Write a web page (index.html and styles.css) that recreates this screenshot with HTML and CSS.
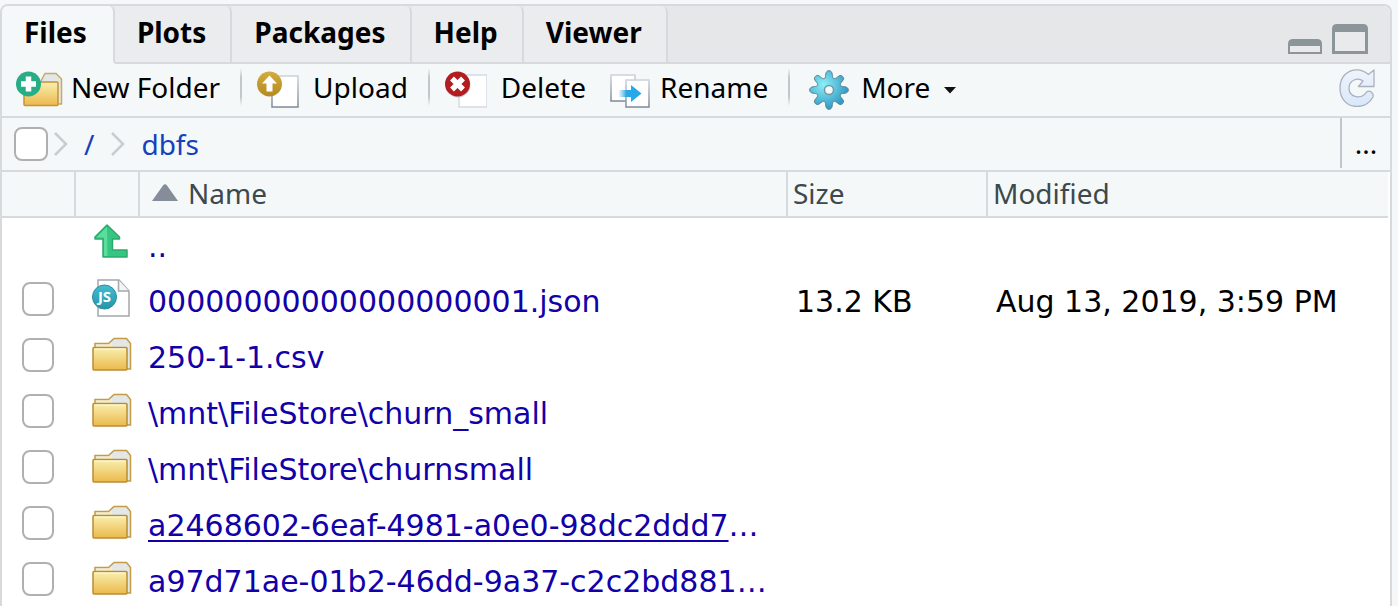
FILE: index.html
```html
<!DOCTYPE html>
<html lang="en">
<head>
<meta charset="utf-8">
<title>Files</title>
<link rel="stylesheet" href="styles.css">
</head>
<body>
<svg class="defs" width="0" height="0" aria-hidden="true">
  <defs>
    <linearGradient id="gold" x1="0" y1="0" x2="0" y2="1"><stop offset="0" stop-color="#f8efb0"/><stop offset="1" stop-color="#ecb94c"/></linearGradient>
    <linearGradient id="amber" x1="0" y1="0" x2="0" y2="1"><stop offset="0" stop-color="#d3ab3e"/><stop offset="1" stop-color="#b58a20"/></linearGradient>
    <linearGradient id="paper" x1="0" y1="0" x2="0" y2="1"><stop offset="0" stop-color="#cdd2da"/><stop offset="1" stop-color="#7d8899"/></linearGradient>
    <linearGradient id="arrow" x1="0" y1="0" x2="1" y2="0"><stop offset="0" stop-color="#27a9e8" stop-opacity="0.1"/><stop offset="0.35" stop-color="#27a9e8"/></linearGradient>
    <linearGradient id="teal" x1="0" y1="0" x2="0" y2="1"><stop offset="0" stop-color="#43bdd0"/><stop offset="1" stop-color="#2595aa"/></linearGradient>
    <radialGradient id="gear" cx="0.36" cy="0.36" r="0.62"><stop offset="0" stop-color="#8cf0f8"/><stop offset="1" stop-color="#369cc6"/></radialGradient>
    <linearGradient id="ice" x1="0" y1="0" x2="0" y2="1"><stop offset="0" stop-color="#f0f3fa"/><stop offset="1" stop-color="#d9e7fb"/></linearGradient>
    <symbol id="folder" viewBox="0 0 40 34">
      <path d="M3 11V6.500h13.500L22 1.500h12.500L38.500 6.500V32H33" fill="#e4e7e8" stroke="#c39c45" stroke-width="1.500"/>
      <path d="M4 9V7.500H17L20 5V10H4Z" fill="#f8edc0"/>
      <rect x="1" y="10.500" width="34" height="22.500" rx="1" fill="url(#gold)" stroke="#b98d35" stroke-width="1.500"/>
      <path d="M2.500 12h31" stroke="#fffbe0"/>
    </symbol>
  </defs>
</svg>
<main class="panel">
  <div class="tabbar">
    <div class="tabs" role="tablist">
      <button class="tab active" role="tab" aria-selected="true">Files</button>
      <button class="tab" role="tab">Plots</button>
      <button class="tab" role="tab">Packages</button>
      <button class="tab" role="tab">Help</button>
      <button class="tab" role="tab">Viewer</button>
    </div>
    <div class="window-controls">
      <button class="plain" aria-label="Minimize"><svg width="34" height="15" viewBox="0 0 34 15"><path fill-rule="evenodd" fill="#8b959a" d="M0 15V5Q0 0 5 0H29Q34 0 34 5V15ZM2 7H32V13H2Z"/><path d="M2 7H32V13H2Z" fill="#e9eaec"/></svg></button>
      <button class="plain" aria-label="Maximize"><svg width="36" height="30" viewBox="0 0 36 30"><path fill-rule="evenodd" fill="#8b959a" d="M0 30V5Q0 0 5 0H31Q36 0 36 5V30ZM3 8H33V27H3Z"/><path d="M3 8H33V27H3Z" fill="#e9eaec"/></svg></button>
    </div>
  </div>

  <div class="toolbar">
    <button class="tool">
      <svg class="tool-icon" width="48" height="38" viewBox="0 0 48 38">
        <path d="M24 12L29 2.500H40L45.500 8V33H40" fill="#e4e7e8" stroke="#c8a965" stroke-width="1.500"/>
        <rect x="8" y="11" width="34" height="23.500" rx="1" fill="url(#gold)" stroke="#c69432" stroke-width="1.500"/>
        <circle cx="12.500" cy="13" r="12.500" fill="#27ae86"/>
        <path d="M12.500 5.500V20.500M5 13H20" stroke="#fff" stroke-width="5.500"/>
      </svg><span class="label">New Folder</span></button>
    <span class="divider"></span>
    <button class="tool upload">
      <svg class="tool-icon" width="42" height="38" viewBox="0 0 42 38">
        <rect x="15" y="5" width="26" height="31" fill="#fff" stroke="url(#paper)" stroke-width="1.500"/>
        <circle cx="12.500" cy="13" r="12.500" fill="url(#amber)"/>
        <path d="M12.500 4.500L20 12.500H15.500V20.500H9.500V12.500H5Z" fill="#fff"/>
      </svg><span class="label">Upload</span></button>
    <span class="divider"></span>
    <button class="tool upload">
      <svg class="tool-icon" width="42" height="38" viewBox="0 0 42 38">
        <rect x="14" y="4" width="28" height="32" fill="#fff" stroke="#d3dae3" stroke-width="1.500"/>
        <circle cx="13" cy="14" r="12.500" fill="#c9ccd0"/>
        <circle cx="12.500" cy="13" r="12.500" fill="#b31d20"/>
        <path d="M7 7.500L18 18.500M18 7.500L7 18.500" stroke="#fff" stroke-width="5.500"/>
      </svg><span class="label">Delete</span></button>
    <button class="tool rename">
      <svg class="tool-icon" width="40" height="38" viewBox="0 0 40 38">
        <rect x="1" y="4" width="24" height="26" fill="#fff" stroke="url(#paper)" stroke-width="1.500"/>
        <rect x="16" y="9" width="23" height="27" fill="#fff" stroke="url(#paper)" stroke-width="1.500"/>
        <path d="M9 19H21V14L31.500 22.500L21 31V26H9Z" fill="url(#arrow)"/>
      </svg><span class="label">Rename</span></button>
    <span class="divider"></span>
    <button class="tool more">
      <svg class="tool-icon gear" width="40" height="40" viewBox="-20 -20 40 40">
        <path fill="url(#gear)" stroke="#55828f" stroke-width="1" stroke-linejoin="round" d="M-4.500 -11.500C-2.500 -13 -4.500 -19.300 0 -19.300S2.500 -13 4.500 -11.500C7.500 -10 10 -17 13.600 -13.600S10 -7.500 11.500 -4.500C13 -2.500 19.300 -4.500 19.300 0S13 2.500 11.500 4.500C10 7.500 17 10 13.600 13.600S7.500 10 4.500 11.500C2.500 13 4.500 19.300 0 19.300S-2.500 13 -4.500 11.500C-7.500 10 -10 17 -13.600 13.600S-10 7.500 -11.500 4.500C-13 2.500 -19.300 4.500 -19.300 0S-13 -2.500 -11.500 -4.500C-10 -7.500 -17 -10 -13.600 -13.600S-7.500 -10 -4.500 -11.500Z"/>
        <circle r="4.500" fill="#f4f8f9" stroke="#6a9aa5" stroke-width="1.500"/>
      </svg><span class="label">More</span><svg class="caret" width="12" height="8" viewBox="0 0 12 8"><path d="M0 1H12L6 7.500Z" fill="#111"/></svg></button>
    <button class="plain refresh" aria-label="Refresh">
      <svg width="36" height="38" viewBox="0 0 36 38"><path fill="url(#ice)" stroke="#a9b0c0" stroke-width="1.300" stroke-linejoin="round" d="M29.500 5.500L35 1V17.500H19.500L24 12C19 8 10 11 10 19C10 29 23 31 28 22.500C31 21 35 24 34 28C30 35 25 37.500 18 37.500C8 37.500 1 30 1 19S8 .800 18 .800C23 .800 26 2.500 29.500 5.500Z"/></svg>
    </button>
  </div>

  <nav class="path" aria-label="Path">
    <input type="checkbox" class="check" aria-label="Select all">
    <svg class="chevron" width="14" height="24" viewBox="0 0 14 24"><path d="M1 1L12 12L1 23" fill="none" stroke="#c9ccd3" stroke-width="2.500"/></svg>
    <a href="#" class="crumb root">/</a>
    <svg class="chevron" width="14" height="24" viewBox="0 0 14 24"><path d="M1 1L12 12L1 23" fill="none" stroke="#c9ccd3" stroke-width="2.500"/></svg>
    <a href="#" class="crumb">dbfs</a>
    <button class="plain browse" aria-label="Go to directory">...</button>
  </nav>

  <div class="listing">
    <table class="files">
      <colgroup><col class="c-check"><col class="c-icon"><col class="c-name"><col class="c-size"><col></colgroup>
      <thead>
        <tr><th></th><th></th><th class="name"><svg class="sort" width="26" height="17" viewBox="0 0 26 17"><path d="M0 17L11 1.500Q13 -1 15 1.500L26 17Z" fill="#848d98"/></svg>Name</th><th>Size</th><th>Modified</th></tr>
      </thead>
      <tbody>
        <tr class="up"><td></td><td class="icon"><svg width="34" height="34" viewBox="0 0 34 34"><path d="M13 1L25.500 13V15H18.500V26H33V33H9V15H1V13Z" fill="#36c681" stroke="#2aaa6b" stroke-width="1.500" stroke-linejoin="round"/><path d="M13 2.500L2.500 13.500H10V32H13.500Z" fill="#5bdd9b"/></svg></td><td class="name"><a href="#">..</a></td><td></td><td></td></tr>
        <tr><td><input type="checkbox" class="check" aria-label="00000000000000000001.json"></td><td class="icon"><svg width="38" height="38" viewBox="0 0 38 38"><path d="M6 1H27L37 12V37H6Z" fill="#fff" stroke="#a3a8ac" stroke-width="1.500"/><path d="M26.500 1V12H37" fill="#f4f5f6" stroke="#a3a8ac" stroke-width="1.500"/><circle cx="12.500" cy="18" r="12" fill="url(#teal)" stroke="#2e8c9c"/><text x="12.500" y="23" class="badge">JS</text></svg></td><td class="name"><a href="#">00000000000000000001.json</a></td><td class="size">13.2 KB</td><td class="date">Aug 13, 2019, 3:59 PM</td></tr>
        <tr><td><input type="checkbox" class="check" aria-label="250-1-1.csv"></td><td class="icon"><svg width="40" height="34"><use href="#folder"/></svg></td><td class="name"><a href="#">250-1-1.csv</a></td><td></td><td></td></tr>
        <tr><td><input type="checkbox" class="check" aria-label="churn_small"></td><td class="icon"><svg width="40" height="34"><use href="#folder"/></svg></td><td class="name"><a href="#">\mnt\FileStore\churn_small</a></td><td></td><td></td></tr>
        <tr><td><input type="checkbox" class="check" aria-label="churnsmall"></td><td class="icon"><svg width="40" height="34"><use href="#folder"/></svg></td><td class="name"><a href="#">\mnt\FileStore\churnsmall</a></td><td></td><td></td></tr>
        <tr><td><input type="checkbox" class="check" aria-label="a2468602"></td><td class="icon"><svg width="40" height="34"><use href="#folder"/></svg></td><td class="name"><a href="#" class="hovered">a2468602-6eaf-4981-a0e0-98dc2ddd7</a>…</td><td></td><td></td></tr>
        <tr><td><input type="checkbox" class="check" aria-label="a97d71ae"></td><td class="icon"><svg width="40" height="34"><use href="#folder"/></svg></td><td class="name"><a href="#">a97d71ae-01b2-46dd-9a37-c2c2bd881</a>…</td><td></td><td></td></tr>
      </tbody>
    </table>
  </div>
</main>
</body>
</html>
```
FILE: styles.css
```css
* { box-sizing: border-box; }
body {
  margin: 0;
  padding: 4px 6px 0 0;
  min-height: 100vh;
  display: flex;
  background: #f5f7f9;
  color: #000;
  font: 28px/36px "Noto Sans", "Open Sans", sans-serif;
  overflow: hidden;
}
.defs { position: absolute; }
button { font: inherit; color: inherit; background: none; border: 0; padding: 0; }
a { text-decoration: none; }
svg { display: block; flex: none; }
.plain { display: flex; }

.panel {
  flex: 1;
  min-width: 0;
  border: 2px solid #d6dadc;
  border-bottom: 0;
  border-radius: 8px 8px 0 0;
  background: #fff;
  overflow: hidden;
}

.tabbar {
  display: flex;
  justify-content: space-between;
  height: 58px;
  background: #e6e7e9;
  box-shadow: inset 0 -2px #d6dadc;
}
.tabs { display: flex; }
.tab {
  padding: 0 24px 4px 22px;
  font-size: 28px;
  font-weight: 700;
  background: #ebecee;
  border-right: 2px solid #d6dadc;
  border-bottom: 2px solid #d6dadc;
  border-radius: 0 6px 0 0;
}
.tab.active { padding-right: 26px; background: #f4f8f9; border-bottom-color: #f4f8f9; }
.window-controls { display: flex; align-items: flex-end; gap: 10px; padding: 0 22px 10px 0; }

.toolbar {
  display: flex;
  align-items: center;
  height: 54px;
  padding: 0 15px 4px 14px;
  background: #f4f8f9;
  border-bottom: 2px solid #d6dadc;
}
.tool { display: flex; align-items: center; gap: 7px; white-space: nowrap; }
.tool-icon { margin-top: 4px; }
.label { padding-bottom: 2px; }
.tool.upload { gap: 14px; }
.tool.rename { gap: 10px; margin-left: 24px; }
.tool.more { gap: 12px; margin-left: 4px; }
.caret { margin: 4px 0 0 2px; }
.divider {
  width: 2px;
  height: 38px;
  margin: 0 15px 2px 20px;
  background: linear-gradient(#f4f8f9, #c4c7c9 25%, #c4c7c9 75%, #f4f8f9);
}
.refresh { margin-left: auto; }

.path {
  display: flex;
  align-items: center;
  height: 54px;
  padding-left: 12px;
  background: #f4f8f9;
  border-bottom: 2px solid #d6dadc;
}
.check {
  appearance: none;
  display: block;
  flex: none;
  width: 32px;
  height: 34px;
  margin: 0;
  border: 2px solid #b0b0b0;
  border-radius: 8px;
  background: #fff;
}
.path .check { width: 34px; }
.chevron { margin: 0 16px 0 6px; }
.crumb { color: #1541bd; }
.crumb.root { margin-right: 11px; }
.browse {
  align-self: flex-start;
  align-items: center;
  justify-content: center;
  width: 50px;
  height: 50px;
  margin-left: auto;
  border-left: 2px solid #c2c6cc;
}

.listing { padding-right: 2px; }
.files { width: 100%; table-layout: fixed; border-collapse: separate; border-spacing: 0; }
.c-check { width: 74px; }
.c-icon { width: 64px; }
.c-name { width: 648px; }
.c-size { width: 200px; }
th {
  height: 46px;
  padding: 0 0 2px 5px;
  font-weight: 400;
  text-align: left;
  color: #3c494d;
  background: #f4f8f9;
  border-right: 2px solid #d6dadc;
  border-bottom: 2px solid #d6dadc;
}
th:last-child { border-right: 0; }
th.name { padding-left: 12px; }
.sort { display: inline-block; margin-right: 10px; vertical-align: 3px; }
td {
  height: 56px;
  padding: 4px 0 0;
  font-family: "DejaVu Sans", sans-serif;
  font-size: 30px;
  white-space: nowrap;
}
td:first-child { padding: 0 0 2px 20px; }
td.icon { padding: 0 0 5px 16px; }
td.name { padding-left: 8px; color: #1200a8; }
td.name a { color: inherit; }
td.size, td.date { padding-left: 8px; }
.hovered { text-decoration: underline; text-decoration-thickness: 2px; text-underline-offset: 4px; text-decoration-skip-ink: none; }
.up td { height: 54px; }
.up td.icon { padding: 0 0 8px 18px; }
.badge { font: 700 15px "Noto Sans", sans-serif; fill: #fff; text-anchor: middle; }
```
